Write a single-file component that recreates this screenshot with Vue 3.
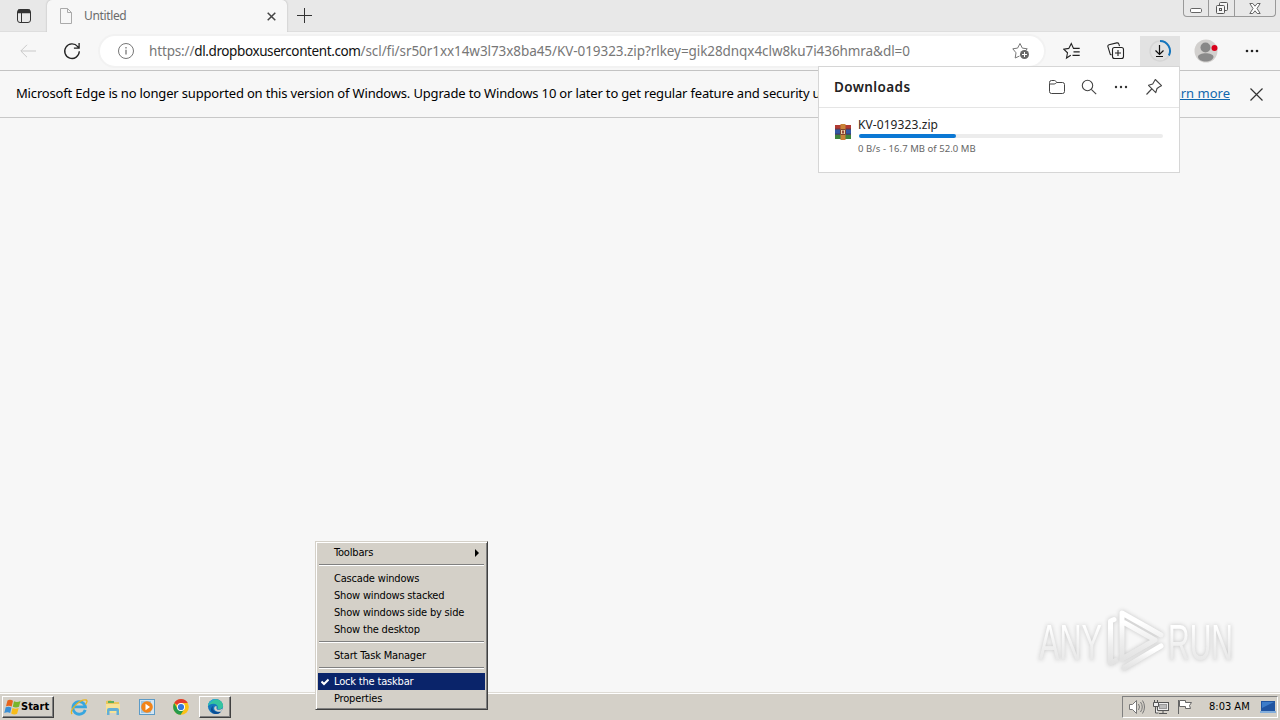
<script setup>
import { ref } from 'vue';

const menuGroups = ref([
  [{ label: 'Toolbars', submenu: true }],
  [
    { label: 'Cascade windows' },
    { label: 'Show windows stacked' },
    { label: 'Show windows side by side' },
    { label: 'Show the desktop' },
  ],
  [{ label: 'Start Task Manager' }],
  [{ label: 'Lock the taskbar', checked: true }, { label: 'Properties' }],
]);

const download = ref({ name: 'KV-019323.zip', status: '0 B/s - 16.7 MB of 52.0 MB', percent: 32 });
</script>

<template>
  <div class="desktop">
    <header class="tab-strip">
      <div class="tab-actions">
        <svg width="16" height="16" viewBox="0 0 16 16" fill="none" stroke="#333">
          <rect x="1.5" y="1.5" width="13" height="13" rx="2.5" />
          <path d="M2 3.2h12M2 4.5h12M2 2.2h12" stroke-width="1.5" />
          <path d="M5.5 5v9" />
        </svg>
      </div>
      <div class="tab">
        <svg width="14" height="16" viewBox="0 0 14 16" fill="none" stroke="#aaa">
          <path d="M1.5.5h7l4 4v11h-11zM8.5.5v4h4" />
        </svg>
        <span class="tab-title">Untitled</span>
        <svg width="9" height="9" viewBox="0 0 9 9" stroke="#444" stroke-width="1.5">
          <path d="M.7.7l7.6 7.6M8.3.7L.7 8.3" />
        </svg>
      </div>
      <svg class="new-tab" width="15" height="15" viewBox="0 0 15 15" stroke="#333">
        <path d="M7.5 0v15M0 7.5h15" />
      </svg>
      <div class="window-controls">
        <span class="min">
          <svg width="12" height="5" viewBox="0 0 12 5" fill="#fff" stroke="#666">
            <rect x=".5" y=".5" width="11" height="4" rx="1.2" />
          </svg>
        </span>
        <span class="restore">
          <svg width="14" height="14" viewBox="0 0 14 14" fill="#f4f4f4" stroke="#555">
            <rect x="4.5" y="1.5" width="8" height="8" rx="1" />
            <rect x="1.5" y="4.5" width="8" height="8" rx="1" />
            <rect x="4.5" y="7.5" width="2" height="2" />
          </svg>
        </span>
        <span class="close">
          <svg width="12" height="11" viewBox="0 0 12 11" fill="#fff" stroke="#666">
            <path d="M.8.5h3L6 3.2 8.2.5h3L8 5.5l3.2 5h-3L6 7.8 3.8 10.5h-3L4 5.5z" />
          </svg>
        </span>
      </div>
    </header>

    <nav class="toolbar">
      <svg class="back" width="16" height="14" viewBox="0 0 16 14" fill="none" stroke="#c9c9c9">
        <path d="M16 7H1M7 .8L.8 7 7 13.2" />
      </svg>
      <svg class="refresh" width="18" height="18" viewBox="0 0 18 18" fill="none" stroke="#222" stroke-width="1.3">
        <path d="M16.3 9.3A7.3 7.3 0 1 1 14.7 4.6L16 6.2M16.1 1v5.2h-5.2" />
      </svg>
      <div class="address">
        <svg width="18" height="18" viewBox="0 0 18 18" fill="none" stroke="#777">
          <circle cx="9" cy="9" r="7.5" />
          <path d="M9 7.8v4.7M9 5v1.5" stroke-width="1.3" />
        </svg>
        <p class="url"><span class="scheme">https://</span><span class="host">dl.dropboxusercontent.com</span><span class="path">/scl/fi/sr50r1xx14w3l73x8ba45/KV-019323.zip?rlkey=gik28dnqx4clw8ku7i436hmra&amp;dl=0</span></p>
        <svg class="add-fav" width="18" height="18" viewBox="0 0 18 18" fill="none" stroke="#777">
          <path d="M7.5 14l-4.3 2 .8-5.200L.8 6.800l4.800-.7L8 1.500l2.300 4.600 5 .7-2 2" />
          <circle cx="12.500" cy="12.500" r="4.500" fill="#666" stroke="none" />
          <path d="M12.500 10v5M10 12.500h5" stroke="#fff" />
        </svg>
      </div>
      <svg class="favorites" width="18" height="18" viewBox="0 0 18 18" fill="none" stroke="#222" stroke-width="1.1">
        <path d="M7.800 13.200L3.500 16l1-5.200L.8 7.200l5-.8L8.300 1.500l2.200 4.900h6.200M10.500 9.900h6.200M9.500 13.400h7.200" />
      </svg>
      <svg class="collections" width="18" height="18" viewBox="0 0 18 18" fill="none" stroke="#222" stroke-width="1.1">
        <path d="M4.500 13L3.300 12.300.9 4.600Q.6 3.200 2 2.800L9.800.9q1.500-.3 2 1l.7 2.300" />
        <rect x="5.500" y="5.500" width="11" height="11" rx="2" />
        <path d="M11 8v6M8 11h6" />
      </svg>
      <div class="download-button">
        <svg width="24" height="24" viewBox="0 0 24 24" fill="none">
          <circle cx="12" cy="12" r="10" stroke="#d6d6d6" stroke-width="1.5" />
          <path d="M12 2a10 10 0 0 1 8.900 14.500" stroke="#1475bd" stroke-width="2" />
          <path d="M11.500 6v9.500M7.500 11.500l4 4 4-4M8 17.500h7" stroke="#111" stroke-width="1.2" />
        </svg>
      </div>
      <svg class="profile" width="26" height="24" viewBox="0 0 26 24">
        <circle cx="12" cy="12" r="11.5" fill="#d2d0ce" />
        <circle cx="11.5" cy="8.5" r="5" fill="#888" />
        <path d="M4 18c0-5 15.500-5 15.500 0-1 6-14.500 6-15.500 0z" fill="#8a8a8a" />
        <circle cx="20.5" cy="9" r="3" fill="#d9001b" />
      </svg>
      <svg class="more" width="14" height="4" viewBox="0 0 14 4" fill="#222">
        <circle cx="2" cy="2" r="1.3" /><circle cx="7" cy="2" r="1.3" /><circle cx="12" cy="2" r="1.3" />
      </svg>
    </nav>

    <section class="notice">
      <span class="notice-text">Microsoft Edge is no longer supported on this version of Windows. Upgrade to Windows 10 or later to get regular feature and security u</span>
      <a class="learn">arn more</a>
      <svg width="13" height="13" viewBox="0 0 13 13" stroke="#333" stroke-width="1.2">
        <path d="M.5.5l12 12M12.500.5l-12 12" />
      </svg>
    </section>

    <main class="page"></main>

    <footer class="taskbar">
      <button class="start">
        <svg width="17" height="16" viewBox="0 0 17 16">
          <path d="M3.500 1.500Q6 0 9 1.800L7.700 7.500Q5 6 2 7.300z" fill="#e8641c" />
          <path d="M10 2.200q3 1.500 6.500-.2l-1.500 5.800q-3 1.500-6.200 0z" fill="#79b52c" />
          <path d="M1.700 8.300q3-1.300 5.700.2L6.200 14Q3.500 12.500.3 14z" fill="#3a8fd5" />
          <path d="M8.500 9q2.800 1.500 6.200.1L13.100 14.700q-2.800 1.500-5.900-.2z" fill="#f8bc18" />
        </svg>
        <span>Start</span>
      </button>
      <div class="quick-launch">
        <svg width="18" height="18" viewBox="0 0 18 18" fill="none">
          <path d="M15.200 11.800A6.300 6.300 0 1 1 15.400 8.800H4.500" stroke="#38a6df" stroke-width="2.8" />
          <path d="M2 16C-1 12 10 1 16 2c2 .4.500 3-.5 4.500" stroke="#e9b520" stroke-width="1.3" />
        </svg>
        <svg width="18" height="18" viewBox="0 0 18 18">
          <path d="M2 3l5-1 1 2h7v9H2z" fill="#e9c65c" />
          <path d="M4 3h6v2H4z" fill="#5fae5c" />
          <path d="M2 6h14v9H2z" fill="#f7e297" />
          <path d="M3 17V12q0-2 2-2h8q2 0 2 2v5h-2.500v-4h-7v4z" fill="#64afd6" />
        </svg>
        <svg width="18" height="18" viewBox="0 0 18 18">
          <rect x="1.5" y="1.5" width="15" height="15" fill="#d4e5f2" stroke="#5c9bc7" />
          <rect x="3" y="3" width="10" height="12" fill="#9bc5e4" />
          <circle cx="9" cy="9" r="5.8" fill="#f28419" />
          <path d="M7.500 5.800l4.500 3.200-4.500 3.200z" fill="#fff" />
        </svg>
        <svg width="18" height="18" viewBox="0 0 18 18">
          <circle cx="9" cy="9" r="7.8" fill="#fbc116" />
          <path d="M9 9L2.200 5.100A7.800 7.800 0 0 1 15.800 5.100H9z" fill="#e33b2e" />
          <path d="M2.200 5.100A7.800 7.800 0 0 0 8.600 16.800L12.300 11H5.600z" fill="#269b4b" />
          <circle cx="9" cy="9" r="4" fill="#fff" />
          <circle cx="9" cy="9" r="3.1" fill="#3477dc" />
        </svg>
      </div>
      <div class="task-active">
        <svg width="17" height="17" viewBox="0 0 18 18">
          <circle cx="9" cy="9" r="8" fill="#1577bd" />
          <path d="M1.100 8.500C1-1 17-1 17 8.500c0 3-3.500 4-6 2.900 1.500-3-1-5.400-4-5.400-3 0-5 1-5.900 2.500z" fill="#34c4a0" />
          <path d="M1.100 8.500C1.500 3 7-.5 12 1.600 8 1 3 3.500 1.100 8.500z" fill="#29a8d8" />
          <path d="M7 8c-3 4 1 8 8 6.500 0 0-2 2.500-5.500 2.500C4 17 2 11 7 8z" fill="#0b4d94" />
          <path d="M10.500 9c-2 4 3 4.500 6 2.200l-1.500 3.200C9 15.500 6 11.500 8.500 8.700z" fill="#d4d0c8" />
        </svg>
      </div>
      <div class="tray">
        <svg width="18" height="16" viewBox="0 0 18 16" fill="#fff" stroke="#777">
          <path d="M1.500 5.500h3l4-4v13l-4-4h-3z" />
          <path d="M10.500 5q2 3 0 6M12.500 3q3.500 5 0 10M14.500 1.500q4 6.500 0 13" fill="none" />
        </svg>
        <svg width="17" height="16" viewBox="0 0 17 16" fill="#eee" stroke="#555">
          <rect x="4.5" y="3.5" width="11" height="8" />
          <rect x="6.5" y="5.5" width="7" height="4" fill="#bbb" stroke="#999" />
          <path d="M6 14.500h8M10 12v2" />
          <path d="M.5 3.500h5v4h-5zM1.500 1v2M4.500 1v2M2.500 8v6h3" />
        </svg>
        <svg width="16" height="16" viewBox="0 0 16 16" fill="#fff" stroke="#666">
          <path d="M1.500 1v14M2.500 1.500h6v2h6l-2 3 1 3h-5v-2h-6z" />
        </svg>
        <time>8:03 AM</time>
        <svg class="show-desktop" width="16" height="14" viewBox="0 0 16 14">
          <path d="M1 1h14v10H1z" fill="#2054a1" />
          <path d="M2 2h12L2 8z" fill="#3d7cc9" />
          <path d="M0 11h16v2H0z" fill="#84aedb" />
        </svg>
      </div>
    </footer>

    <aside class="downloads">
      <div class="downloads-head">
        <h2>Downloads</h2>
        <svg class="folder" width="18" height="16" viewBox="0 0 18 16" fill="none" stroke="#444">
          <path d="M1.500 4.500V3.500q0-2 2-2h3q1 0 1.500 1l.8 1h5.700q2 0 2 2v7q0 2-2 2h-11q-2 0-2-2v-8zM1.500 5h4.700q1 0 2.500-1.500" />
        </svg>
        <svg class="search" width="16" height="16" viewBox="0 0 16 16" fill="none" stroke="#444" stroke-width="1.1">
          <circle cx="6.5" cy="6.5" r="5.2" /><path d="M10.300 10.300l4.900 4.900" />
        </svg>
        <svg class="dots" width="14" height="4" viewBox="0 0 14 4" fill="#333">
          <circle cx="2" cy="2" r="1.2" /><circle cx="7" cy="2" r="1.2" /><circle cx="12" cy="2" r="1.2" />
        </svg>
        <svg class="pin" width="18" height="18" viewBox="0 0 18 18" fill="none" stroke="#444" stroke-width="1.1">
          <path d="M10.300 1.500L16.500 7.700Q14.800 8.200 12 10.500L10.800 14.700 3.500 7.300 7.700 6zM6.700 11l-5.200 5.500" stroke-linejoin="round" />
        </svg>
      </div>
      <div class="download-item">
        <svg width="16" height="16" viewBox="0 0 16 16">
          <path d="M0 1h16v4H0z" fill="#b03a32" />
          <path d="M0 5.500h16v4.500H0z" fill="#3358a4" />
          <path d="M0 10.500h16V15H0z" fill="#3d843e" />
          <path d="M0 4.700h16v1H0zM0 9.800h16v1H0z" fill="#33254a" />
          <path d="M5.500 0h5v16h-5z" fill="#c98337" />
          <path d="M5.500 5.500h5v5h-5z" fill="#edd5ac" stroke="#80452d" />
          <path d="M7 6.500h2v3H7z" fill="#9c4a39" />
        </svg>
        <div class="download-info">
          <span class="file-name">{{ download.name }}</span>
          <div class="progress"><div class="bar" :style="{ width: download.percent + '%' }"></div></div>
          <span class="status">{{ download.status }}</span>
        </div>
      </div>
    </aside>

    <ul class="context-menu">
      <template v-for="(group, i) in menuGroups" :key="i">
        <li v-if="i > 0" class="separator"></li>
        <li v-for="item in group" :key="item.label" class="item" :class="{ selected: item.checked }">
          <svg v-if="item.checked" class="check" width="8" height="8" viewBox="0 0 8 8" fill="none" stroke="#fff" stroke-width="2">
            <path d="M.5 3.500L3 6l4.500-4.500" />
          </svg>
          <span>{{ item.label }}</span>
          <svg v-if="item.submenu" class="arrow" width="4" height="8" viewBox="0 0 4 8">
            <path d="M0 0l4 4-4 4z" />
          </svg>
        </li>
      </template>
    </ul>

    <svg class="watermark" width="220" height="76" viewBox="0 0 220 76">
      <defs>
        <linearGradient id="fade" x1="0" y1="0" x2="0" y2="1">
          <stop offset=".2" stop-color="#fff" />
          <stop offset=".6" stop-color="#eee" />
          <stop offset="1" stop-color="#e3e3e3" />
        </linearGradient>
      </defs>
      <g class="mark-text" fill="url(#fade)">
        <text x="9" y="58" textLength="63" lengthAdjust="spacingAndGlyphs">ANY</text>
        <text x="138" y="58" textLength="65" lengthAdjust="spacingAndGlyphs">RUN</text>
      </g>
      <g class="mark-logo" fill="none" stroke="url(#fade)" stroke-width="5" stroke-linejoin="round" stroke-linecap="round">
        <path d="M84 17.500L80.500 19v42l5-2.500" />
        <path d="M131 33L92 11V57L125 38 94 20.500" />
        <path d="M94 66l37-22" />
      </g>
    </svg>
  </div>
</template>

<style>
body {
  margin: 0;
  overflow: hidden;
}
</style>

<style scoped>
.desktop {
  position: relative;
  display: flex;
  flex-direction: column;
  width: 1280px;
  height: 720px;
  overflow: hidden;
  background: #f7f7f7;
  font-family: 'Noto Sans', sans-serif;
}

svg {
  display: block;
  flex: none;
}

.tab-strip {
  display: flex;
  height: 32px;
  background: #e8e8e8;
  box-shadow: inset 0 -1px #dedede;
}

.tab-actions {
  display: flex;
  align-items: center;
  width: 47px;
  padding-left: 16px;
  box-sizing: border-box;
}

.tab {
  display: flex;
  align-items: center;
  width: 240px;
  box-sizing: border-box;
  padding: 0 11px 0 12px;
  background: #f7f7f7;
  border-radius: 5px 5px 0 0;
  box-shadow: 0 0 2px #aaa;
  clip-path: inset(0 -3px 0 -3px);
}

.tab-title {
  flex: 1;
  margin-left: 11px;
  padding-bottom: 2px;
  font-size: 12px;
  letter-spacing: -0.35px;
  color: #6b6b6b;
}

.new-tab {
  margin: 8px 0 0 10px;
}

.window-controls {
  display: flex;
  width: 93px;
  height: 17px;
  margin: 0 4px 0 auto;
  box-sizing: border-box;
  border: 1px solid #999;
  border-top: 0;
  border-radius: 0 0 4px 4px;
}

.window-controls span {
  display: flex;
  justify-content: center;
  align-items: center;
  border-right: 1px solid #999;
}

.min {
  width: 24px;
  padding-top: 5px;
}

.restore {
  width: 25px;
}

.window-controls .close {
  flex: 1;
  border: 0;
}

.toolbar {
  display: flex;
  align-items: center;
  height: 39px;
  padding: 0 0 1px 20px;
  box-sizing: border-box;
  border-bottom: 1px solid #c3c3c3;
}

.refresh {
  margin-left: 27px;
}

.address {
  display: flex;
  align-items: center;
  width: 944px;
  height: 30px;
  margin-left: 19px;
  padding: 0 14px 0 17px;
  box-sizing: border-box;
  background: #fff;
  border-radius: 15px;
  box-shadow: 0 0 0 2px #f2f2f2;
}

.url {
  flex: 1;
  margin: 0 0 0 14px;
  font-size: 13.5px;
  white-space: nowrap;
  color: #777;
}

.scheme {
  letter-spacing: -0.15px;
}

.host {
  color: #111;
  letter-spacing: -0.4px;
}

.path {
  letter-spacing: -0.07px;
}

.favorites {
  margin-left: 19px;
}

.add-fav {
  margin-right: 0;
}

.collections {
  margin-left: 26px;
}

.download-button {
  display: flex;
  align-items: center;
  justify-content: center;
  width: 40px;
  height: 30px;
  margin-left: 15px;
  background: #e2e2e2;
}

.profile {
  margin-left: 14px;
}

.more {
  margin-left: 25px;
}

.notice {
  display: flex;
  align-items: center;
  height: 47px;
  padding: 0 17px 0 16px;
  box-sizing: border-box;
  border-bottom: 1px solid #c8c8c8;
  font-size: 13px;
  color: #000;
  white-space: nowrap;
}

.notice-text {
  padding-bottom: 2px;
  letter-spacing: -0.17px;
}

.learn {
  margin: 0 20px 0 auto;
  padding-bottom: 2px;
  color: #1168ae;
  text-decoration: underline;
}

.page {
  flex: 1;
}

.taskbar {
  display: flex;
  align-items: center;
  height: 28px;
  padding: 1px 2px 1px;
  box-sizing: border-box;
  background: #d4d0c8;
  border-top: 1px solid #dedbd5;
  box-shadow: inset 0 1px #fff;
  font-family: 'DejaVu Sans Condensed', 'DejaVu Sans', sans-serif;
}

.start {
  display: flex;
  align-items: center;
  width: 52px;
  height: 22px;
  padding: 0 0 0 1px;
  background: #d4d0c8;
  border: 1px solid;
  border-color: #fff #404040 #404040 #fff;
  box-shadow: inset -1px -1px #808080;
  font: bold 11px 'DejaVu Sans Condensed', sans-serif;
}

.quick-launch {
  display: flex;
  gap: 16px;
  margin-left: 16px;
}

.task-active {
  display: flex;
  align-items: center;
  justify-content: center;
  width: 32px;
  height: 22px;
  margin-left: 9px;
  box-sizing: border-box;
  border: 1px solid;
  border-color: #fff #404040 #404040 #fff;
  box-shadow: inset -1px -1px #808080;
}

.tray {
  display: flex;
  align-items: center;
  width: 156px;
  height: 22px;
  margin-left: auto;
  padding: 0 1px 0 5px;
  box-sizing: border-box;
  border: 1px solid;
  border-color: #808080 #fff #fff #808080;
}

.tray svg + svg {
  margin-left: 7px;
}

.tray time {
  margin-left: 16px;
  font-size: 11px;
}

.tray .show-desktop {
  margin-left: auto;
}

.downloads {
  position: absolute;
  left: 818px;
  top: 66px;
  width: 362px;
  height: 107px;
  box-sizing: border-box;
  background: #fff;
  border: 1px solid #d6d6d6;
}

.downloads-head {
  display: flex;
  align-items: center;
  height: 41px;
  padding: 0 16px 0 15px;
  box-sizing: border-box;
  border-bottom: 1px solid #e5e5e5;
}

.downloads h2 {
  margin: 0 auto 0 0;
  font-size: 13.5px;
  font-weight: 600;
  letter-spacing: 0.4px;
  color: #222;
}

.search {
  margin-left: 15px;
}

.dots {
  margin-left: 17px;
}

.pin {
  margin-left: 17px;
}

.download-item {
  display: flex;
  padding: 8px 16px 0;
}

.download-item > svg {
  margin-top: 8px;
}

.download-info {
  flex: 1;
  margin-left: 7px;
}

.file-name,
.status {
  display: block;
  white-space: nowrap;
}

.file-name {
  height: 18px;
  font-size: 12px;
  line-height: 18px;
  letter-spacing: 0.08px;
  color: #222;
}

.progress {
  height: 4px;
  margin-left: 1px;
  border-radius: 2px;
  background: #ececec;
}

.bar {
  height: 4px;
  border-radius: 2px;
  background: #0b78d4;
}

.status {
  margin-top: 4px;
  font-size: 9.5px;
  line-height: 14px;
  letter-spacing: 0.05px;
  color: #666;
}

.context-menu {
  position: absolute;
  left: 315px;
  top: 541px;
  width: 173px;
  margin: 0;
  padding: 2px;
  box-sizing: border-box;
  list-style: none;
  background: #d4d0c8;
  border: 1px solid;
  border-color: #d4d0c8 #404040 #404040 #d4d0c8;
  box-shadow: inset 1px 1px #fff, inset -1px -1px #808080;
  font-family: 'DejaVu Sans Condensed', 'DejaVu Sans', sans-serif;
  font-size: 11px;
  letter-spacing: -0.18px;
}

.item {
  position: relative;
  display: flex;
  align-items: center;
  height: 17px;
  padding: 0 6px 0 16px;
  white-space: nowrap;
}

.selected {
  background: #0a246a;
  color: #fff;
}

.check {
  position: absolute;
  left: 3px;
  top: 5px;
}

.arrow {
  margin-left: auto;
}

.separator {
  height: 1px;
  margin: 3px 1px 4px;
  border-top: 1px solid #808080;
  background: #fff;
}

.watermark {
  position: absolute;
  left: 1030px;
  top: 602px;
  filter: drop-shadow(0 0 2px #c4c4c4);
}

.mark-text {
  font-family: 'Liberation Sans', sans-serif;
  font-size: 50px;
}
</style>
